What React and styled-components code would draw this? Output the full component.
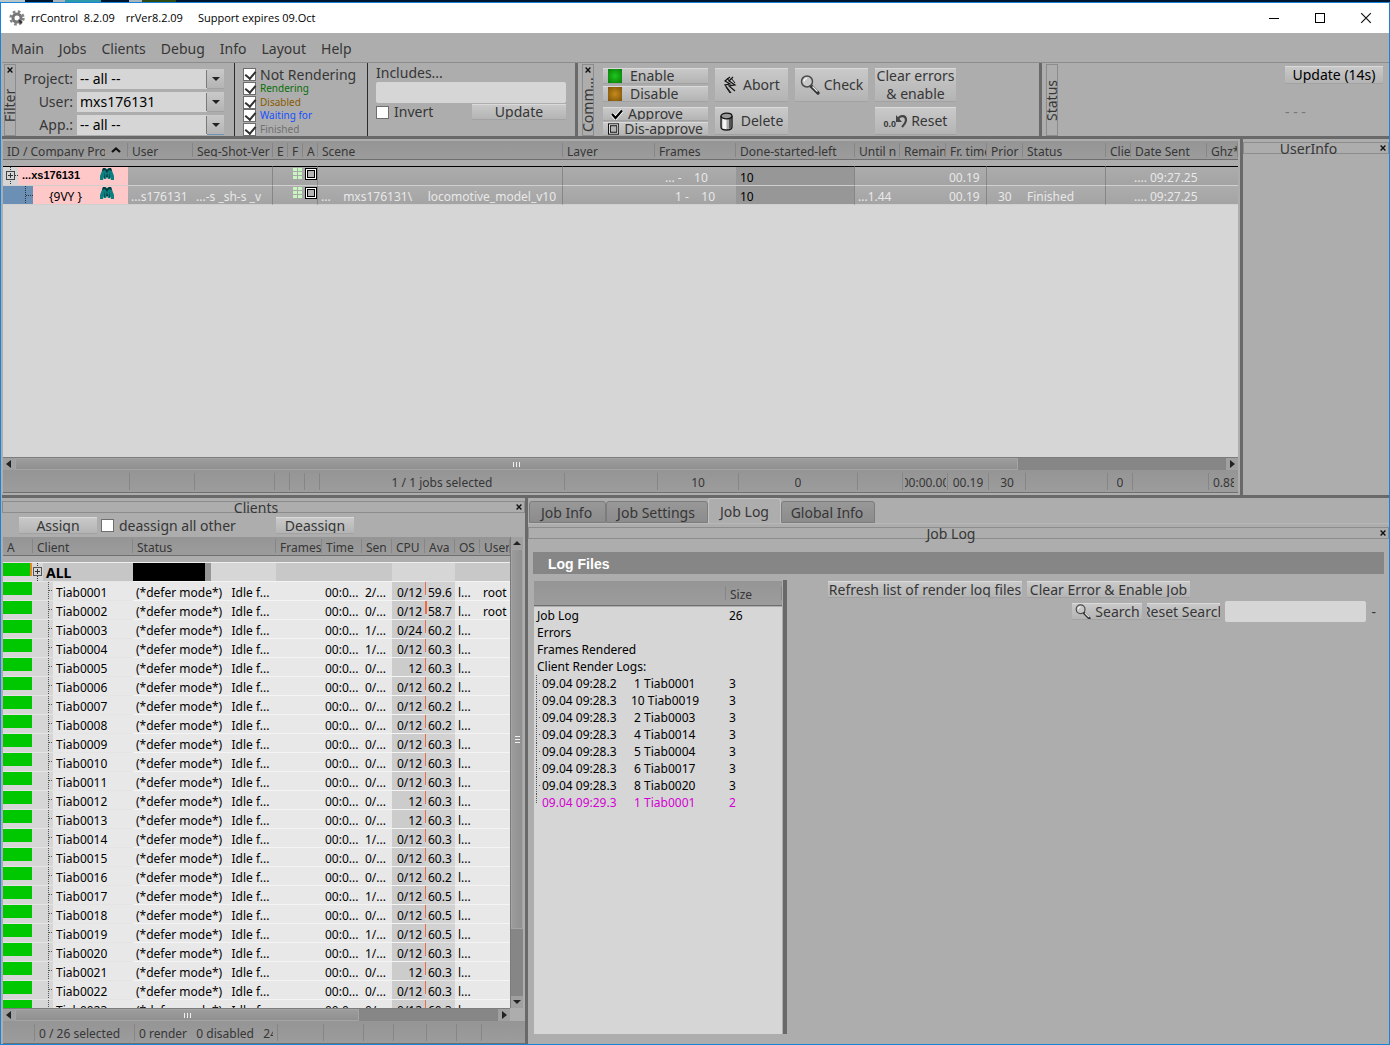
import React from "react";
import styled, { createGlobalStyle, css } from "styled-components";

const C = {
  base: "#adadad",
  frame: "#8c8c8c",
  split: "#696969",
  head: "linear-gradient(#959595, #9c9c9c)",
  field: "#d6d6d6",
  text: "#363636",
  pink: "#ffc8c8",
};

const Global = createGlobalStyle`
  * { box-sizing: border-box; }
  body { margin: 0; background: ${C.base}; }
  button, input, select { font: inherit; color: inherit; margin: 0; padding: 0; }
`;

const Window = styled.div`
  height: 100vh;
  display: flex;
  flex-direction: column;
  overflow: hidden;
  background: ${C.base};
  color: ${C.text};
  font: 14px/18px "Noto Sans", "Open Sans", sans-serif;
`;
const Desktop = styled.div`
  flex: none;
  height: 2px;
  background: linear-gradient(90deg, #b9c6ca 0 25px, #00162e 25px 53px, #a9b4bc 53px 65px, #2c9aa8 65px 101px,
    #00162e 101px 129px, #a9b4bc 129px 142px, #2f4a12 142px 176px, #00162e 176px);
`;
const Frame = styled.div`
  flex: 1;
  min-height: 0;
  display: flex;
  flex-direction: column;
  border: 1px solid #1883d7;
`;
const Client = styled.main`
  flex: 1;
  min-height: 0;
  display: flex;
  flex-direction: column;
  padding-left: 1px;
`;
const TitleBar = styled.header`
  flex: none;
  height: 30px;
  display: flex;
  align-items: center;
  padding-left: 8px;
  background: #fff;
  color: #000;
`;
const TitleText = styled.span`
  margin-left: ${(p) => p.$gap}px;
  white-space: pre;
  font-family: "Open Sans", "Noto Sans", sans-serif;
  font-size: 11px;
`;
const WindowButtons = styled.div`
  margin-left: auto;
  display: flex;
`;
const WindowButton = styled.button`
  width: 46px;
  height: 30px;
  border: 0;
  background: none;
  display: grid;
  place-items: center;
`;
const Menu = styled.nav`
  flex: none;
  height: 30px;
  display: flex;
  align-items: center;
  gap: 15px;
  padding: 2px 0 0 9px;
  border-bottom: 1px solid ${C.frame};
`;
const MenuItem = styled.a`
  color: inherit;
  text-decoration: none;
`;

/* Shared controls */
const Button = styled.button`
  display: flex;
  align-items: center;
  justify-content: ${(p) => (p.$start ? "flex-start" : "center")};
  gap: ${(p) => p.$gap ?? 6}px;
  width: ${(p) => (p.$w ? p.$w + "px" : "auto")};
  height: ${(p) => p.$h ?? 17}px;
  padding: 0 ${(p) => p.$pad ?? 0}px;
  border: 0;
  border-top: 1px solid #dadada;
  border-bottom: 1px solid #a2a2a2;
  background: linear-gradient(#c9c9c9, #b4b4b4);
  line-height: 18px;
  white-space: nowrap;
  overflow: hidden;
  color: ${(p) => (p.$dark ? "#000" : "inherit")};
`;
const TextBox = styled.input`
  width: ${(p) => p.$w}px;
  height: 21px;
  border: 0;
  border-radius: 2px;
  background: ${C.field};
`;
const Check = styled.input`
  appearance: none;
  flex: none;
  position: relative;
  width: 13px;
  height: 13px;
  border: 1px solid #6e6e6e;
  background: #fff;
  &:checked::after {
    content: "";
    position: absolute;
    left: 3px;
    top: 0;
    width: 5px;
    height: 8px;
    border: solid #303030;
    border-width: 0 2px 2px 0;
    transform: rotate(40deg);
  }
`;
const CheckLabel = styled.label`
  display: flex;
  align-items: center;
  gap: 5px;
  width: ${(p) => (p.$w ? p.$w + "px" : "auto")};
  white-space: nowrap;
`;
const VSplit = styled.div`
  flex: none;
  width: ${(p) => p.$w ?? 3}px;
  background: ${(p) => (p.$thin ? "#2c2c2c" : C.split)};
`;
const HSplit = styled.div`
  flex: none;
  height: 3px;
  background: ${C.split};
`;

/* Dock title strips */
const CloseButton = styled.button`
  flex: none;
  width: 10px;
  height: 10px;
  border: 0;
  background: none;
  display: grid;
  place-items: center;
`;
const SideTitle = styled.div`
  flex: none;
  width: 12px;
  margin: 1px 0 0 ${(p) => (p.$edge ? 2 : 4)}px;
  border: 1px solid ${C.frame};
  display: flex;
  flex-direction: column;
  align-items: center;
`;
const SideText = styled.span`
  flex: 1;
  writing-mode: vertical-rl;
  transform: rotate(180deg);
  line-height: 12px;
  text-align: center;
  white-space: nowrap;
`;
const TopTitle = styled.div`
  flex: none;
  height: 12px;
  margin: 3px 0 0;
  border: 1px solid ${C.frame};
  display: flex;
  align-items: center;
`;
const TopText = styled.span`
  flex: 1;
  padding: 2px 5px 0 0;
  text-align: center;
  line-height: 12px;
`;

/* Toolbar */
const Toolbar = styled.div`
  flex: none;
  height: 73px;
  display: flex;
`;
const FilterForm = styled.div`
  width: 218px;
  padding: 6px 10px 0 0;
  display: grid;
  grid-template-columns: 1fr 147px;
  grid-auto-rows: 20px;
  column-gap: 4px;
  row-gap: 3px;
  align-items: center;
  text-align: right;
`;
const SelectBox = styled.div`
  position: relative;
  display: flex;
  height: 20px;
  background: ${C.field};
`;
const Select = styled.select`
  appearance: none;
  flex: 1;
  border: 0;
  padding-left: 3px;
  background: none;
  color: #000;
`;
const SelectArrow = styled.span`
  position: absolute;
  right: 0;
  top: 0;
  width: 17px;
  height: 20px;
  border-bottom: 1px solid ${(p) => (p.$active ? "#6f93b4" : "#a2a2a2")};
  background: linear-gradient(#c9c9c9, #b4b4b4);
  box-shadow: -2px 0 0 -1px #7a7a7a;
  pointer-events: none;
  display: grid;
  place-items: center;
`;
const StateList = styled.div`
  width: 132px;
  padding: 5px 13px 0 8px;
  display: flex;
  flex-direction: column;
  justify-content: space-between;
`;
const StateLabel = styled.label`
  display: flex;
  align-items: center;
  gap: 4px;
  height: 13px;
  font-size: ${(p) => (p.$big ? 14 : 10)}px;
  line-height: 15px;
  color: ${(p) => p.$color};
  white-space: nowrap;
`;
const Includes = styled.div`
  width: 207px;
  padding: 1px 9px 0 8px;
  display: flex;
  flex-direction: column;
`;
const IncludesRow = styled.div`
  display: flex;
  align-items: center;
  justify-content: space-between;
  height: 18px;
`;
const Commands = styled.div`
  width: 445px;
  padding: 5px 0 0 9px;
  display: flex;
  gap: 7px;
`;
const CommandColumn = styled.div`
  width: ${(p) => p.$w}px;
  display: flex;
  flex-direction: column;
  gap: 5px;
`;
const ButtonPair = styled.div`
  display: flex;
  flex-direction: column;
  gap: ${(p) => p.$gap}px;
`;
const Swatch = styled.span`
  width: 14px;
  height: 14px;
  background: ${(p) => p.$bg};
`;
const StatusPane = styled.div`
  flex: 1;
  display: flex;
  flex-direction: column;
  align-items: flex-end;
  gap: 19px;
  padding: 3px 6px 0 0;
`;
const Dashes = styled.span`
  width: 98px;
  color: #777;
`;

/* Main areas */
const Upper = styled.div`
  flex: 356 1 0;
  min-height: 0;
  display: flex;
`;
const Lower = styled.div`
  flex: 546 1 0;
  min-height: 0;
  display: flex;
`;
const JobsPanel = styled.section`
  flex: 1;
  min-width: 0;
  display: flex;
  flex-direction: column;
  padding: 2px 2px 2px 1px;
`;
const UserInfo = styled.section`
  flex: none;
  width: 146px;
`;
const ListArea = styled.div`
  flex: 1;
  min-height: 0;
  overflow: hidden;
  background: ${C.field};
`;
const Table = styled.table`
  width: 100%;
  table-layout: fixed;
  border-collapse: separate;
  border-spacing: 0;
  font-size: 12px;
  line-height: 18px;
`;
const Th = styled.th`
  height: ${(p) => p.$h ?? 25}px;
  padding: 0;
  vertical-align: top;
  text-align: left;
  font-weight: 400;
  background: ${C.base};
`;
const HeadCell = styled.div`
  height: 19px;
  padding-left: 4px;
  background: ${C.head};
  border-bottom: 1px solid #6f6f6f;
  display: flex;
`;
const HeadText = styled.span`
  flex: 1;
  height: 16px;
  line-height: 22px;
  overflow: hidden;
  white-space: pre;
`;
const HeadLine = styled.i`
  width: 1px;
  height: 14px;
  margin-top: 2px;
  background: #868686;
`;
const SortMark = styled.span`
  flex: none;
  width: 22px;
  padding: 0 0 0 6px;
  line-height: 15px;
`;
const JobRow = styled.tr`
  color: #e8e8e8;
  background: linear-gradient(#adadad, #a3a3a3);
`;
const JobCell = styled.td`
  padding: ${(p) => p.$pt ?? 4}px 0 0 ${(p) => p.$pl ?? 4}px;
  overflow: hidden;
  white-space: pre;
  line-height: 14px;
  vertical-align: top;
  border-bottom: 1px solid #cfcfcf;
  ${(p) => p.$line && css`border-right: 1px solid #868686;`}
  ${(p) => p.$dark && css`background: #979797; color: #000;`}
  ${(p) => p.$first && css`border-top: 1px solid #000;`}
`;
const JobName = styled.div`
  display: flex;
  height: 18px;
  align-items: flex-start;
  background: ${C.pink};
  color: #000;
`;
const Gutter = styled.span`
  flex: none;
  align-self: stretch;
  width: ${(p) => p.$w}px;
`;
const JobId = styled.span`
  flex: none;
  width: ${(p) => p.$w}px;
  padding: ${(p) => (p.$bold ? 2 : 4)}px 0 0 ${(p) => p.$pl}px;
  ${(p) => p.$bold && css`font: bold 11px/13px "Liberation Sans", Arial, sans-serif;`}
`;
const Flags = styled.div`
  display: flex;
  justify-content: flex-end;
`;

/* Scroll bars */
const HBar = styled.div`
  flex: ${(p) => (p.$grow ? 1 : "none")};
  display: flex;
  height: 13px;
  background: #868686;
  border-top: 1px solid #7c7c7c;
`;
const VBar = styled.div`
  flex: none;
  display: flex;
  flex-direction: column;
  width: 13px;
  background: #868686;
  border-left: 1px solid #7c7c7c;
`;
const BarButton = styled.button`
  flex: none;
  width: 12px;
  height: 12px;
  border: 0;
  background: #a0a0a0;
  display: grid;
  place-items: center;
`;
const Thumb = styled.div`
  flex: ${(p) => p.$size} 1 0;
  display: flex;
  flex-direction: ${(p) => (p.$vertical ? "column" : "row")};
  align-items: center;
  justify-content: center;
  gap: 2px;
  border: 1px solid #a4a4a4;
  background: linear-gradient(${(p) => (p.$vertical ? "90deg, " : "")}#9c9c9c, #909090);
`;
const Grip = styled.i`
  width: ${(p) => (p.$vertical ? 5 : 1)}px;
  height: ${(p) => (p.$vertical ? 1 : 5)}px;
  background: #f0f0f0;
`;
const Rest = styled.div`
  flex: ${(p) => p.$size} 1 0;
`;

const Footer = styled.div`
  flex: none;
  display: flex;
  height: 23px;
  padding: 3px 0 2px;
  background: ${C.head};
  border-bottom: 1px solid #6f6f6f;
  font-size: 12px;
  line-height: 20px;
`;
const FootCell = styled.span`
  flex: ${(p) => (p.$w ? `0 0 ${p.$w}px` : "1")};
  display: flex;
  justify-content: ${(p) => (p.$left ? "flex-start" : "center")};
  padding: 0 ${(p) => (p.$tight ? 1 : 4)}px 0 ${(p) => (p.$tight ? 2 : 4)}px;
  overflow: hidden;
  white-space: pre;
  & + & { border-left: 1px solid #868686; }
`;
const FootText = styled.span`
  display: flex;
  justify-content: inherit;
  min-width: 0;
  overflow: hidden;
`;

/* Clients */
const ClientsPanel = styled.section`
  flex: none;
  width: 523px;
  display: flex;
  flex-direction: column;
`;
const ClientTools = styled.div`
  flex: none;
  display: flex;
  align-items: center;
  height: 24px;
  padding: 1px 0 0 17px;
  gap: 4px;
`;
const ClientGrid = styled.div`
  flex: 1;
  min-height: 0;
  display: flex;
  margin-left: 1px;
`;
const ClientBar = styled.div`
  flex: none;
  display: flex;
  margin-left: 1px;
`;
const ClientFooter = styled.div`
  flex: none;
  margin-left: 1px;
`;
const ClientCell = styled.td`
  height: 19px;
  padding: 4px 0 0 3px;
  overflow: hidden;
  white-space: pre;
  line-height: 14px;
  color: #000;
  background: ${(p) => p.$bg ?? "#e8e8e8"};
  border-top: 1px solid #f4f4f4;
  ${(p) => p.$right && css`text-align: right; padding-right: 3px;`}
`;
const PlainCell = styled.td`
  height: 19px;
  padding: 0;
  background: ${(p) => p.$bg ?? "#d6d6d6"};
  border-top: 1px solid #e4e4e4;
  vertical-align: top;
  overflow: hidden;
`;
const Alive = styled.div`
  height: 13px;
  margin-right: 1px;
  background: #00c800;
  ${(p) => p.$warn && css`border-right: 2px solid #e8862a;`}
`;
const TreeCell = styled.div`
  display: flex;
  height: 18px;
  color: #000;
  background: ${(p) => p.$bg ?? "#e8e8e8"};
`;
const TreeName = styled.span`
  padding: ${(p) => (p.$bold ? 2 : 4)}px 0 0 3px;
  line-height: 14px;
  ${(p) => p.$bold && css`font-size: 14px; font-weight: 700; line-height: 16px;`}
`;
const Redacted = styled.div`
  width: 78px;
  height: 18px;
  background: #000;
  border-right: 6px solid #979797;
`;
const Avail = styled.div`
  height: 18px;
  padding: 4px 0 0 3px;
  line-height: 14px;
  color: #000;
  background: linear-gradient(#f06a45, #f06a45) 0 0 / ${(p) => (p.$hot ? 2 : 1)}px 13px no-repeat;
`;
const SummaryCell = styled(PlainCell)`
  border-top: 1px solid #efefef;
`;

/* Log side */
const LogPanel = styled.section`
  flex: 1;
  min-width: 0;
  display: flex;
  flex-direction: column;
`;
const Tabs = styled.div`
  flex: none;
  display: flex;
  align-items: flex-end;
  height: 26px;
  padding-left: 1px;
  border-bottom: 1px solid #b8b8b8;
`;
const Tab = styled.button`
  width: ${(p) => p.$w}px;
  height: 22px;
  padding: 2px 2px 0 0;
  border: 1px solid #7c7c7c;
  border-radius: 3px 3px 0 0;
  background: linear-gradient(#989898, #8c8c8c);
  line-height: 18px;
  ${(p) => p.$active && css`
    height: 25px;
    padding-right: 0;
    border-color: #c2c2c2;
    border-bottom: 0;
    background: ${C.base};
  `}
`;
const LogHeading = styled.h2`
  flex: none;
  margin: 13px 5px 0 5px;
  height: 22px;
  padding: 2px 0 0 15px;
  background: #868686;
  color: #fff;
  font: bold 14px/21px "Liberation Sans", Arial, sans-serif;
`;
const LogBody = styled.div`
  flex: 1;
  min-height: 0;
  display: flex;
  padding: 6px 13px 10px 6px;
`;
const LogList = styled.div`
  flex: none;
  width: 249px;
  margin-top: 1px;
  background: ${C.field};
  border-right: 1px solid ${C.base};
`;
const LogHeadCell = styled(HeadCell)`
  height: 25px;
  padding-top: 3px;
`;
const LogCell = styled.td`
  height: 17px;
  padding: 0 0 0 ${(p) => (p.$child ? 0 : 3)}px;
  line-height: 17px;
  white-space: pre;
  color: ${(p) => (p.$pink ? "#d400d4" : "#000")};
`;
const LogEntry = styled.div`
  display: grid;
  grid-template-columns: 8px 89px 1fr;
`;
const Branch = styled.i`
  width: 4px;
  margin-left: 2px;
  height: ${(p) => (p.$last ? 9 : 17)}px;
  border-left: 1px dotted #555;
  background: ${(p) => (p.$last ? "none" : "linear-gradient(#555, #555) 2px 8px / 1px 1px no-repeat")};
`;
const LogTools = styled.div`
  flex: 1;
  display: flex;
  flex-direction: column;
  gap: 3px;
  padding: 1px 0 0 41px;
`;
const ToolRow = styled.div`
  display: flex;
  align-items: center;
  justify-content: ${(p) => (p.$end ? "flex-end" : "flex-start")};
  gap: 5px;
`;

/* Icons */
const Gear = () => (
  <svg width="16" height="16" viewBox="0 0 16 16" aria-hidden="true">
    <circle cx="8" cy="8" r="4" fill="none" stroke="#777" strokeWidth="3" />
    <circle cx="8" cy="8" r="6.4" fill="none" stroke="#858585" strokeWidth="2.6" strokeDasharray="2.6 2.43" />
    <path d="M9 9l5 3-3 2z" fill="#333" />
    <circle cx="8" cy="8" r="2" fill="#fff" />
  </svg>
);
const Cross = ({ size = 6, w = 1.4 }) => (
  <svg width={size} height={size} viewBox="0 0 6 6" aria-hidden="true">
    <path d="M.6.6l4.8 4.8M5.4.6L.6 5.4" stroke="#111" strokeWidth={w} />
  </svg>
);
const Arrow = ({ dir }) => {
  const d = { left: "M6 0v8L1 4z", right: "M2 0v8l5-4z", up: "M0 6h8L4 2z", down: "M0 2h8L4 6z" }[dir];
  return <svg width="8" height="8" viewBox="0 0 8 8" aria-hidden="true"><path d={d} fill="#222" /></svg>;
};
const SortArrow = () => (
  <svg width="10" height="6" viewBox="0 0 10 6" aria-hidden="true">
    <path d="M1 5l4-3.500L9 5" fill="none" stroke="#111" strokeWidth="2.200" />
  </svg>
);
const Bolt = () => (
  <svg width="14" height="20" viewBox="0 0 14 20" aria-hidden="true">
    <path d="M7 2L2 6l5 3-5 1 6 8M10 2L6 6l6 4-6 1 6 5" fill="none" stroke="#111" strokeWidth="1.200" />
    <path d="M4 3l3 4M8 3l4 5M3 12l4 6" stroke="#111" />
  </svg>
);
const Magnifier = ({ size = 20 }) => (
  <svg width={size} height={size} viewBox="0 0 20 20" aria-hidden="true">
    <path d="M11 11l7 7" stroke="#333" strokeWidth="3.2" strokeLinecap="round" />
    <path d="M12.500 11.500l5 5" stroke="#eee" strokeWidth="1.300" />
    <circle cx="7" cy="6.500" r="5.500" fill="#c8c8c8" stroke="#4a4a4a" strokeWidth="1.500" />
    <path d="M4 6.500A3 3 0 0 1 7 3.500" fill="none" stroke="#fff" strokeWidth="1.200" />
  </svg>
);
const Can = () => (
  <svg width="13" height="19" viewBox="0 0 13 19" aria-hidden="true">
    <path d="M1 4v11c0 4 11 4 11 0V4" fill="#aaa" stroke="#111" strokeWidth="1.3" />
    <path d="M2.500 6v10.500l4 .7V7z" fill="#f4f4f4" />
    <path d="M9 7v10l2-1.500V6z" fill="#555" />
    <ellipse cx="6.500" cy="4" rx="5.500" ry="2.800" fill="#999" stroke="#111" strokeWidth="1.3" />
  </svg>
);
const Undo = () => (
  <svg width="11" height="15" viewBox="0 0 11 15" aria-hidden="true">
    <path d="M2 5c2-4 8-4 8 1 0 3-2 5-4 7" fill="none" stroke="#444" strokeWidth="2.200" />
    <path d="M0 1v7h6z" fill="#444" />
  </svg>
);
const ResetMark = styled.span`
  display: flex;
  align-items: flex-end;
  font: bold 9px/10px "Liberation Sans", Arial, sans-serif;
`;
const Tick = () => (
  <svg width="14" height="11" viewBox="0 0 14 11" aria-hidden="true">
    <path d="M2 5l3.500 4L12 1.500" fill="none" stroke="#fff" strokeWidth="4" />
    <path d="M2 5l3.500 4L12 1.500" fill="none" stroke="#000" strokeWidth="2.200" />
  </svg>
);
const BoxMark = () => (
  <svg width="12" height="12" viewBox="0 0 12 12" aria-hidden="true">
    <rect x=".5" y=".5" width="11" height="11" fill="#fff" stroke="#000" />
    <rect x="2.500" y="2.500" width="7" height="7" fill="#b5b5b5" stroke="#000" />
  </svg>
);
const GridMark = () => (
  <svg width="10" height="12" viewBox="0 0 10 12" aria-hidden="true">
    {[0, 1, 2].map((r) => [0, 1].map((c) => (
      <rect key={r + "-" + c} x={c * 5} y={r * 4} width="4" height="3" fill="#c8f5c0" />
    )))}
  </svg>
);
const MayaMark = () => (
  <svg width="14" height="14" viewBox="0 0 14 14" aria-hidden="true">
    <path d="M3 1h2l2 1 2-1h2l3 8v4h-3l-1-3v2H8l-1-2-1 2H4v-2l-1 3H0V9z" fill="#0c7f80" />
    <path d="M3 1h2l2 2 2-2h2l1 3-3-1-2 3-2-3-3 1z" fill="#06393c" />
    <path d="M4 5v6h1zM10 5v6H9zM7 6l-1 4h2z" fill="#06393c" />
  </svg>
);
const TreeGutter = ({ root }) => (
  <svg width={root ? 10 : 20} height="18" aria-hidden="true">
    <rect width="20" height="18" fill="#d6d6d6" />
    {root ? (
      <>
        <path d="M4.500 0v5M4.500 13v5" stroke="#333" strokeDasharray="1 1" />
        <rect x=".5" y="4.500" width="8" height="8" fill="#d6d6d6" stroke="#555" />
        <path d="M2 8.500h5M4.500 6v5" stroke="#333" />
      </>
    ) : (
      <path d="M15.500 0v18M16 8.500h4" stroke="#555" strokeDasharray="1 1" />
    )}
  </svg>
);
const JobTree = ({ root }) => (
  <svg width={root ? 15 : 30} height="18" aria-hidden="true">
    {root ? (
      <>
        <rect width="15" height="18" fill="#d6d6d6" />
        <path d="M7.500 0v4M7.500 14v4M12 8.500h3" stroke="#333" strokeDasharray="1 1" />
        <rect x="3.500" y="4.500" width="8" height="8" fill="none" stroke="#444" />
        <path d="M5 8.500h5M7.500 6v5" stroke="#333" />
      </>
    ) : (
      <>
        <rect width="30" height="18" fill="#6b8fb5" />
        <path d="M22.500 0v18M23 9.500h7" stroke="#333" strokeDasharray="1 1" />
      </>
    )}
  </svg>
);

/* Data */
const MENU = ["Main", "Jobs", "Clients", "Debug", "Info", "Layout", "Help"];
const STATES = [
  ["Not Rendering", C.text, true],
  ["Rendering", "#0a6e0a"],
  ["Disabled", "#8a5a00"],
  ["Waiting for", "#1450ff"],
  ["Finished", "#707070"],
];
const JOB_COLS = [
  ["ID / Company Pro", 125, true], ["User", 65], ["Seq-Shot-Ver", 80], ["E", 15], ["F", 15], ["A", 15], ["Scene", 245],
  ["Layer", 92], ["Frames", 81], ["Done-started-left", 119], ["Until n", 45], ["Remain", 46], ["Fr. time", 41],
  ["Prior", 36], ["Status", 83], ["Clie", 25], ["Date Sent", 76], ["Ghz*", null],
];
const JOB_FOOT = [
  [126], [65], [80], [15], [15], [15], [245, "1 / 1 jobs selected"], [93], [81, "10"], [119, "0"], [45],
  [45, "00:00.00"], [41, "00.19"], [37, "30"], [82], [25, "0"], [76], [0, "0.88.", true],
];
const CLIENT_COLS = [
  ["A", 30], ["Client", 100], ["Status", 143], ["Frames", 46], ["Time", 40], ["Sen", 30], ["CPU", 33],
  ["Ava", 30], ["OS", 25], ["User", null],
];
const CLIENT_FOOT = [
  [31], [100, "0 / 26 selected", true], [143, "0 render   0 disabled   24", true],
  [46], [40], [30], [33], [30], [25], [0],
];
const CLIENTS = [
  [2, "0/12", "59.6", "root"], [0, "0/12", "58.7", "root"], [1, "0/24", "60.2"], [1, "0/12", "60.3"],
  [0, "12", "60.3"], [0, "0/12", "60.2"], [0, "0/12", "60.2"], [0, "0/12", "60.2"], [0, "0/12", "60.3"],
  [0, "0/12", "60.3"], [0, "0/12", "60.3"], [0, "12", "60.3"], [0, "12", "60.3"], [1, "0/12", "60.3"],
  [0, "0/12", "60.3"], [0, "0/12", "60.2"], [1, "0/12", "60.5"], [0, "0/12", "60.5"], [1, "0/12", "60.5"],
  [1, "0/12", "60.3"], [0, "12", "60.3"], [0, "0/12", "60.3"], [0, "0/12", "60.3"],
];
const LOGS = [
  ["09.04 09:28.2", " 1 Tiab0001", "3"], ["09.04 09:28.3", "10 Tiab0019", "3"], ["09.04 09:28.3", " 2 Tiab0003", "3"],
  ["09.04 09:28.3", " 4 Tiab0014", "3"], ["09.04 09:28.3", " 5 Tiab0004", "3"], ["09.04 09:28.3", " 6 Tiab0017", "3"],
  ["09.04 09:28.3", " 8 Tiab0020", "3"], ["09.04 09:29.3", " 1 Tiab0001", "2"],
];

const Columns = ({ cols }) => (
  <colgroup>
    {cols.map(([name, w]) => <col key={name} width={w ?? undefined} />)}
  </colgroup>
);
const HeadRow = ({ cols }) => (
  <thead>
    <tr>
      {cols.map(([name, , sorted]) => (
        <Th key={name} scope="col">
          <HeadCell>
            <HeadText>{name}</HeadText>
            {sorted && <SortMark><SortArrow /></SortMark>}
            <HeadLine />
          </HeadCell>
        </Th>
      ))}
    </tr>
  </thead>
);
const SideDock = ({ title, edge, closable = true }) => (
  <SideTitle $edge={edge}>
    {closable && <CloseButton aria-label={`Close ${title}`}><Cross /></CloseButton>}
    <SideText>{title}</SideText>
  </SideTitle>
);
const TopDock = ({ title }) => (
  <TopTitle>
    <TopText>{title}</TopText>
    <CloseButton aria-label={`Close ${title}`}><Cross /></CloseButton>
  </TopTitle>
);
const Combo = ({ label, id, value, active }) => (
  <>
    <label htmlFor={id}>{label}</label>
    <SelectBox>
      <Select id={id} defaultValue={value}><option>{value}</option></Select>
      <SelectArrow $active={active}><Arrow dir="down" /></SelectArrow>
    </SelectBox>
  </>
);
const ScrollH = ({ thumb, rest, grow }) => (
  <HBar $grow={grow}>
    <BarButton aria-label="Scroll left"><Arrow dir="left" /></BarButton>
    <Thumb $size={thumb}><Grip /><Grip /><Grip /></Thumb>
    <Rest $size={rest} />
    <BarButton aria-label="Scroll right"><Arrow dir="right" /></BarButton>
  </HBar>
);
const Foot = ({ cells }) => (
  <Footer>
    {cells.map(([w, text, left], i) => (
      <FootCell key={i} $w={w} $left={left} $tight={w === 45}>{text && <FootText>{text}</FootText>}</FootCell>
    ))}
  </Footer>
);
const JobLine = ({ root, cells }) => (
  <JobRow>
    <JobCell $pl={0} $pt={0} $first={root}>
      <JobName>
        <JobTree root={root} />
        <JobId $w={root ? 82 : 67} $pl={root ? 4 : 16} $bold={root}>{root ? "...xs176131" : "{9VY }"}</JobId>
        <MayaMark />
      </JobName>
    </JobCell>
    {cells.map(([text, opt], i) => <JobCell key={i} $first={root} {...opt}>{text}</JobCell>)}
  </JobRow>
);
const LINE = { $line: true };
const FLAG_F = [<Flags key="f"><GridMark /></Flags>, { $pl: 0, $pt: 1 }];
const FLAG_A = [<Flags key="a"><BoxMark /></Flags>, { $pl: 0, $pt: 1, $line: true }];

export default function App() {
  return (
    <>
      <Global />
      <Window>
        <Desktop />
        <Frame>
          <TitleBar>
            <Gear />
            <TitleText $gap={6}>{"rrControl  8.2.09"}</TitleText>
            <TitleText $gap={11}>rrVer8.2.09</TitleText>
            <TitleText $gap={15}>Support expires 09.Oct</TitleText>
            <WindowButtons>
              <WindowButton aria-label="Minimize"><svg width="10" height="10"><path d="M0 5.500h10" stroke="#000" /></svg></WindowButton>
              <WindowButton aria-label="Maximize"><svg width="10" height="10"><rect x=".5" y=".5" width="9" height="9" fill="none" stroke="#000" /></svg></WindowButton>
              <WindowButton aria-label="Close window"><Cross size={12} w={0.6} /></WindowButton>
            </WindowButtons>
          </TitleBar>
          <Client>
            <Menu>{MENU.map((m) => <MenuItem key={m} href="#">{m}</MenuItem>)}</Menu>

            <Toolbar>
              <SideDock title="Filter" edge />
              <FilterForm>
                <Combo label="Project:" id="project" value="-- all --" />
                <Combo label="User:" id="user" value="mxs176131" />
                <Combo label="App.:" id="app" value="-- all --" active />
              </FilterForm>
              <VSplit $w={1} $thin />
              <StateList>
                {STATES.map(([name, color, big]) => (
                  <StateLabel key={name} $color={color} $big={big}>
                    <Check type="checkbox" defaultChecked />{name}
                  </StateLabel>
                ))}
              </StateList>
              <VSplit $w={1} $thin />
              <Includes>
                <label htmlFor="includes">Includes...</label>
                <TextBox id="includes" $w={190} />
                <IncludesRow>
                  <CheckLabel><Check type="checkbox" />Invert</CheckLabel>
                  <Button $w={94} $h={16}>Update</Button>
                </IncludesRow>
              </Includes>
              <VSplit />
              <SideDock title="Comm..." />
              <Commands>
                <CommandColumn $w={105}>
                  <ButtonPair $gap={2}>
                    <Button $start $pad={5} $gap={8} $h={16}><Swatch $bg="radial-gradient(#1cc81c, #0b7a0b)" />Enable</Button>
                    <Button $start $pad={5} $gap={8} $h={16}><Swatch $bg="radial-gradient(#c88a1c, #7a5208)" />Disable</Button>
                  </ButtonPair>
                  <ButtonPair $gap={1}>
                    <Button $start $pad={7} $gap={4} $h={14}><Tick />Approve</Button>
                    <Button $start $pad={5} $gap={5} $h={14}><BoxMark />Dis-approve</Button>
                  </ButtonPair>
                </CommandColumn>
                <CommandColumn $w={73}>
                  <Button $h={34}><Bolt />Abort</Button>
                  <Button $h={28} $gap={8}><Can />Delete</Button>
                </CommandColumn>
                <CommandColumn $w={73}>
                  <Button $h={34} $gap={4}><Magnifier />Check</Button>
                </CommandColumn>
                <CommandColumn $w={81}>
                  <Button $h={34}>Clear errors<br />& enable</Button>
                  <Button $h={28} $gap={4}><ResetMark>0.0<Undo /></ResetMark>Reset</Button>
                </CommandColumn>
              </Commands>
              <VSplit />
              <SideDock title="Status" closable={false} />
              <StatusPane>
                <Button $w={98} $h={18} $dark>Update (14s)</Button>
                <Dashes>- - -</Dashes>
              </StatusPane>
            </Toolbar>
            <HSplit />

            <Upper>
              <JobsPanel>
                <ListArea>
                  <Table>
                    <Columns cols={JOB_COLS} />
                    <HeadRow cols={JOB_COLS} />
                    <tbody>
                      <JobLine root cells={[
                        [""], ["", LINE], [""], FLAG_F, FLAG_A, ["", LINE], [""],
                        ["... -    10", { $pl: 10 }], ["10", { $dark: true, $line: true }], [""], [""],
                        ["00.19", { $pl: 3, $line: true }], [""], ["", LINE], [""], [".... 09:27.25", { $pl: 3 }], [""],
                      ]} />
                      <JobLine cells={[
                        ["...s176131", { $pl: 3 }], ["...-s _sh-s _v", { $pl: 3, $line: true }], [""], FLAG_F, FLAG_A,
                        ["...    mxs176131\\     locomotive_model_v10", { $pl: 3, $line: true }], [""], ["1 -    10", { $pl: 20 }],
                        ["10", { $dark: true, $line: true }], ["...1.44", { $pl: 3 }], [""], ["00.19", { $pl: 3, $line: true }],
                        ["30", { $pl: 11 }], ["Finished", LINE], [""], [".... 09:27.25", { $pl: 3 }], [""],
                      ]} />
                    </tbody>
                  </Table>
                </ListArea>
                <ScrollH thumb={1003} rest={208} />
                <Foot cells={JOB_FOOT} />
              </JobsPanel>
              <VSplit />
              <UserInfo><TopDock title="UserInfo" /></UserInfo>
            </Upper>
            <HSplit />

            <Lower>
              <ClientsPanel>
                <TopDock title="Clients" />
                <ClientTools>
                  <Button $w={78}>Assign</Button>
                  <CheckLabel $w={171}><Check type="checkbox" />deassign all other</CheckLabel>
                  <Button $w={78}>Deassign</Button>
                </ClientTools>
                <ClientGrid>
                  <ListArea>
                    <Table>
                      <Columns cols={CLIENT_COLS} />
                      <HeadRow cols={CLIENT_COLS} />
                      <tbody>
                        <tr>
                          <PlainCell><Alive $warn /></PlainCell>
                          <SummaryCell $bg="#c6c6c6">
                            <TreeCell $bg="#c6c6c6"><TreeGutter root /><TreeName $bold>ALL</TreeName></TreeCell>
                          </SummaryCell>
                          <SummaryCell><Redacted /></SummaryCell>
                          <SummaryCell $bg="#c8c8c8" /><SummaryCell $bg="#c8c8c8" /><SummaryCell $bg="#c8c8c8" />
                          <SummaryCell /><SummaryCell />
                          <SummaryCell $bg="#c8c8c8" /><SummaryCell $bg="#c8c8c8" />
                        </tr>
                        {CLIENTS.map(([sent, cpu, avail, user = ""], i) => (
                          <tr key={i}>
                            <PlainCell><Alive /></PlainCell>
                            <PlainCell>
                              <TreeCell><TreeGutter /><TreeName>{`Tiab${String(i + 1).padStart(4, "0")}`}</TreeName></TreeCell>
                            </PlainCell>
                            <ClientCell>{"(*defer mode*)   Idle f..."}</ClientCell>
                            <ClientCell />
                            <ClientCell>00:0...</ClientCell>
                            <ClientCell>{`${sent}/...`}</ClientCell>
                            <ClientCell $bg="#cccccc" $right>{cpu}</ClientCell>
                            <PlainCell $bg="#d2d2d2"><Avail $hot={i === 1}>{avail}</Avail></PlainCell>
                            <ClientCell>l...</ClientCell>
                            <ClientCell>{user}</ClientCell>
                          </tr>
                        ))}
                      </tbody>
                    </Table>
                  </ListArea>
                  <VBar>
                    <BarButton aria-label="Scroll up"><Arrow dir="up" /></BarButton>
                    <Thumb $size={379} $vertical><Grip $vertical /><Grip $vertical /><Grip $vertical /></Thumb>
                    <Rest $size={67} />
                    <BarButton aria-label="Scroll down"><Arrow dir="down" /></BarButton>
                  </VBar>
                  <Gutter $w={2} />
                </ClientGrid>
                <ClientBar>
                  <ScrollH thumb={343} rest={139} grow />
                  <Gutter $w={15} />
                </ClientBar>
                <ClientFooter><Foot cells={CLIENT_FOOT} /></ClientFooter>
              </ClientsPanel>
              <VSplit />
              <LogPanel>
                <Tabs role="tablist">
                  <Tab role="tab" $w={77}>Job Info</Tab>
                  <Tab role="tab" $w={102}>Job Settings</Tab>
                  <Tab role="tab" $w={73} $active aria-selected="true">Job Log</Tab>
                  <Tab role="tab" $w={94}>Global Info</Tab>
                </Tabs>
                <TopDock title="Job Log" />
                <LogHeading>Log Files</LogHeading>
                <LogBody>
                  <LogList>
                    <Table>
                      <colgroup><col width="192" /><col /></colgroup>
                      <thead>
                        <tr>
                          <Th scope="col" $h={26}><LogHeadCell><HeadText /><HeadLine /></LogHeadCell></Th>
                          <Th scope="col" $h={26}><LogHeadCell><HeadText>Size</HeadText><HeadLine /></LogHeadCell></Th>
                        </tr>
                      </thead>
                      <tbody>
                        <tr><LogCell>Job Log</LogCell><LogCell>26</LogCell></tr>
                        <tr><LogCell>Errors</LogCell><LogCell /></tr>
                        <tr><LogCell>Frames Rendered</LogCell><LogCell /></tr>
                        <tr><LogCell>Client Render Logs:</LogCell><LogCell /></tr>
                        {LOGS.map(([time, name, size], i) => {
                          const last = i === LOGS.length - 1;
                          return (
                            <tr key={i}>
                              <LogCell $child $pink={last}>
                                <LogEntry><Branch $last={last} /><span>{time}</span><span>{name}</span></LogEntry>
                              </LogCell>
                              <LogCell $pink={last}>{size}</LogCell>
                            </tr>
                          );
                        })}
                      </tbody>
                    </Table>
                  </LogList>
                  <VSplit $w={4} />
                  <LogTools>
                    <ToolRow>
                      <Button $w={194}>Refresh list of render log files</Button>
                      <Button $w={163}>Clear Error & Enable Job</Button>
                    </ToolRow>
                    <ToolRow $end>
                      <Button $w={70} $gap={4}><Magnifier size={16} />Search</Button>
                      <Button $w={73}>Reset Search</Button>
                      <TextBox $w={141} aria-label="Search text" />
                      <span>-</span>
                    </ToolRow>
                  </LogTools>
                </LogBody>
              </LogPanel>
            </Lower>
          </Client>
        </Frame>
      </Window>
    </>
  );
}
